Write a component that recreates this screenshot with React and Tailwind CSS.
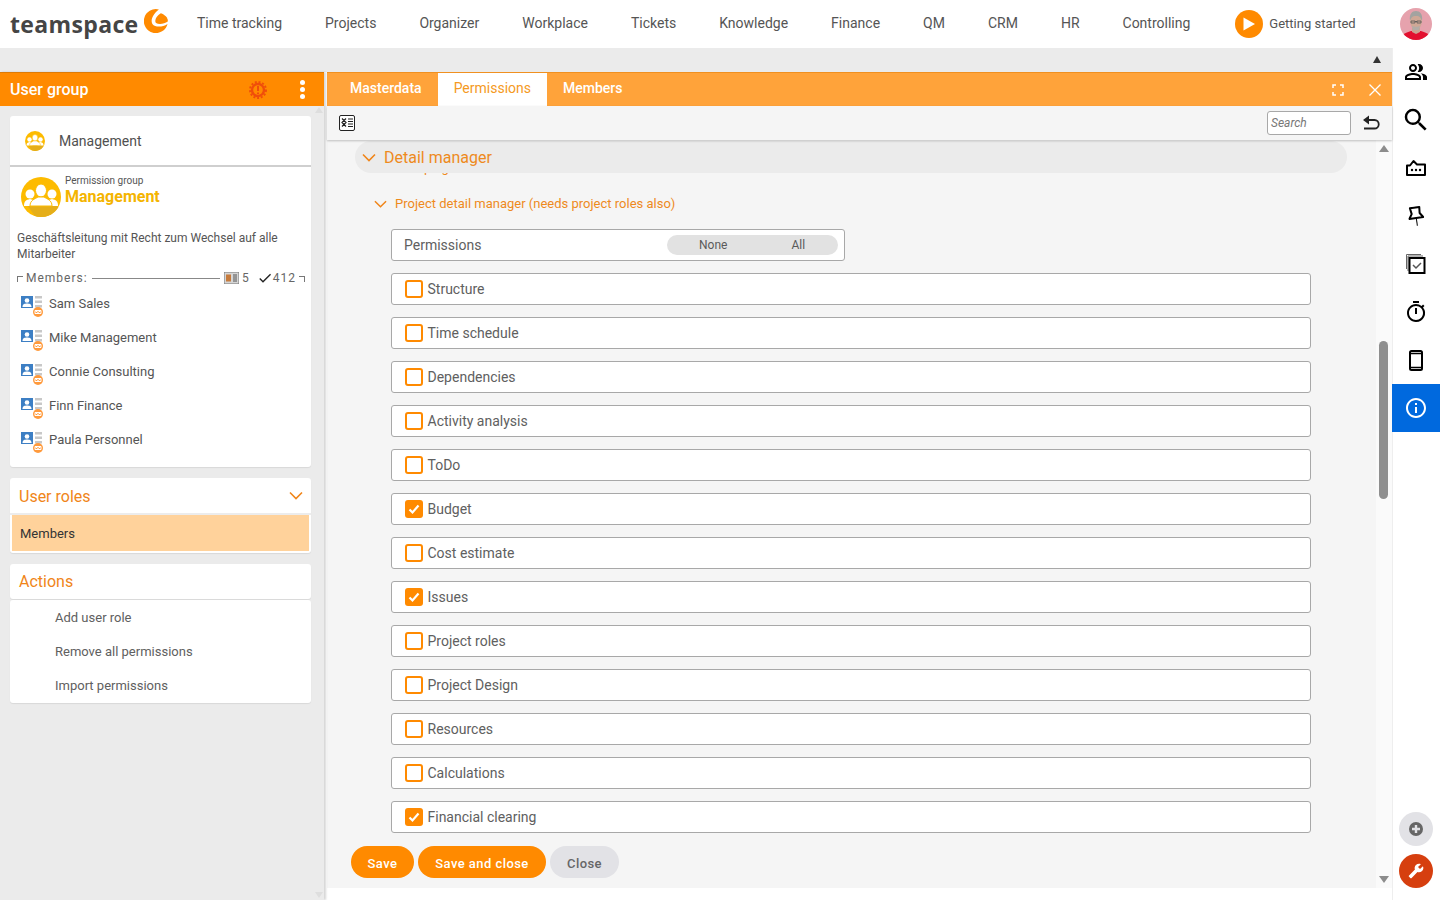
import { MdSearch, MdOutlinePeopleAlt, MdOutlineTimer, MdInfoOutline, MdBuild, MdCheck } from 'react-icons/md';

const navItems = ['Time tracking', 'Projects', 'Organizer', 'Workplace', 'Tickets', 'Knowledge', 'Finance', 'QM', 'CRM', 'HR', 'Controlling'];
const members = ['Sam Sales', 'Mike Management', 'Connie Consulting', 'Finn Finance', 'Paula Personnel'];
const actions = ['Add user role', 'Remove all permissions', 'Import permissions'];
const permissions = [
  { name: 'Structure' },
  { name: 'Time schedule' },
  { name: 'Dependencies' },
  { name: 'Activity analysis' },
  { name: 'ToDo' },
  { name: 'Budget', checked: true },
  { name: 'Cost estimate' },
  { name: 'Issues', checked: true },
  { name: 'Project roles' },
  { name: 'Project Design' },
  { name: 'Resources' },
  { name: 'Calculations' },
  { name: 'Financial clearing', checked: true },
];

function Logo() {
  return (
    <div className="flex items-start w-[157px] ml-[10px]">
      <span className="font-['Open_Sans'] font-bold text-[23px] leading-[50px] tracking-[0.35px] text-[#454545]">teamspace</span>
      <svg width="24" height="24" viewBox="0 0 100 100" className="ml-[5px] mt-[10px] shrink-0">
        <path fill="#ff8a00" d="M62 2A50 50 0 1 0 98 62C75 78 45 76 35 62C25 45 40 18 62 2Z" />
        <path fill="#ff8a00" d="M70 18C50 30 42 50 50 58C62 66 85 62 99 52C101 38 88 24 70 18Z" />
      </svg>
    </div>
  );
}

function Avatar() {
  return (
    <svg width="32" height="32" viewBox="0 0 32 32" className="rounded-full shrink-0">
      <rect width="32" height="32" fill="#e6a2ad" />
      <path fill="#e3102f" d="M1 32c0-6 4-7 10-9h10c6 2 10 3 10 9z" />
      <path fill="#c9a392" d="M12 20h8v4l-4 2-4-2z" />
      <ellipse cx="16" cy="13" rx="6" ry="8.500" fill="#cfa896" />
      <path fill="#a3a3a0" d="M10 13c-1-7 2-10 6-10s7 3 6 10c-1-3-2-5-6-5s-5 2-6 5z" />
      <path fill="#b3aca6" d="M12 18c2 1 6 1 8 0l-1 4h-6z" />
      <path stroke="#555" strokeWidth="0.800" fill="none" d="M11 13h4v2h-4zM17 13h4v2h-4zM15 13.500h2" />
    </svg>
  );
}

function GroupIcon({ size }) {
  return (
    <svg width={size} height={size} viewBox="0 0 40 40" className="shrink-0">
      <circle cx="20" cy="20" r="20" fill="#fdbb00" />
      <path fill="#e5ae19" d="M6 28h28l3.500 2A20 20 0 0 1 14 39z" />
      <g fill="#fff">
        <circle cx="9" cy="17" r="4.500" />
        <path d="M3 29c0-5 2-6 6-7 4 1 6 2 6 7z" />
        <circle cx="31" cy="17" r="4.500" />
        <path d="M25 29c0-5 2-6 6-7 4 1 6 2 6 7z" />
      </g>
      <g fill="#fff" stroke="#fdbb00" strokeWidth="1">
        <ellipse cx="20" cy="13.500" rx="5.500" ry="6.500" />
        <path d="M9 29c0-6 5-7 8-9h6c3 2 8 3 8 9z" />
      </g>
    </svg>
  );
}

function MemberIcon() {
  return (
    <svg width="23" height="22" viewBox="0 0 23 22" className="shrink-0 mt-px">
      <rect x="0" y="0" width="12" height="12" fill="#3d7fc4" />
      <circle cx="6" cy="4.500" r="2.300" fill="#fff" />
      <path fill="#fff" d="M1.500 11c0-3 2-3.500 4.500-3.500s4.500.5 4.500 3.500z" />
      <path fill="#c8c8c8" d="M14 0h7v2.500h-7zM14 4.500h7V7h-7zM14 9h7v2.500h-7z" />
      <circle cx="17" cy="16" r="5" fill="#ff9a3c" />
      <path stroke="#fff" strokeWidth="1" fill="none" d="M14 14.500h6v3h-6zM14 14.500l3 2 3-2" />
    </svg>
  );
}

function Chevron({ size = 14, width = 1.6 }) {
  return (
    <svg width={size} height={size} viewBox="0 0 14 14" className="shrink-0">
      <path d="M1 3.500l6 6 6-6" fill="none" stroke="#f08519" strokeWidth={width} />
    </svg>
  );
}

function Checkbox({ checked }) {
  if (checked) {
    return (
      <span className="w-[18px] h-[18px] rounded-[3px] bg-[#ff8a00] flex items-center justify-center shrink-0">
        <svg width="14" height="14" viewBox="0 0 14 14">
          <path d="M2.500 7.500l3 3 6-7" fill="none" stroke="#fff" strokeWidth="2.200" />
        </svg>
      </span>
    );
  }
  return <span className="w-[18px] h-[18px] rounded-[3px] border-2 border-[#ff8a00] bg-white shrink-0" />;
}

function PermissionRow({ name, checked }) {
  return (
    <div className="h-8 w-[920px] bg-white border border-[#a8a8a8] rounded-[3px] flex items-center pl-[13px] gap-[4.500px] text-[14px] text-[#606060]">
      <Checkbox checked={checked} />
      <span>{name}</span>
    </div>
  );
}

function RailIcon({ children }) {
  return <div className="h-12 flex items-center justify-center text-black">{children}</div>;
}

function Sidebar() {
  return (
    <section className="w-[324px] shrink-0 flex flex-col bg-[#ebebeb] shadow-[2px_0_2px_rgba(0,0,0,0.16)] z-10 relative">
      <span className="absolute left-[315px] top-[35px] w-0 h-0 border-x-[4px] border-x-transparent border-b-[6px] border-b-[#dedede]" />
      <span className="absolute left-[315px] bottom-[2px] w-0 h-0 border-x-[4px] border-x-transparent border-t-[6px] border-t-[#dedede]" />
      <div className="h-[34px] bg-[#ff8a00] border-t border-[#dd7a05] flex items-center pl-[10px] text-white shrink-0">
        <span className="text-[16px] font-medium">User group</span>
        <svg width="18" height="18" viewBox="0 0 18 18" className="ml-auto">
          <circle cx="9" cy="9" r="6" fill="none" stroke="#f04e0a" strokeWidth="2.400" />
          <circle cx="9" cy="9" r="8" fill="none" stroke="#f04e0a" strokeWidth="2" strokeDasharray="2 1.800" />
          <path d="M9 5v5M9 11.500v1.500" stroke="#f04e0a" strokeWidth="2" />
        </svg>
        <div className="flex flex-col gap-[2px] ml-[33px] mr-[19px]">
          <span className="w-[5px] h-[5px] rounded-full bg-white" />
          <span className="w-[5px] h-[5px] rounded-full bg-white" />
          <span className="w-[5px] h-[5px] rounded-full bg-white" />
        </div>
      </div>

      <div className="w-[301px] ml-[10px] mt-[10px] flex flex-col gap-[11px]">
        <div className="bg-white rounded-[3px] shadow-[0_1px_1px_rgba(0,0,0,0.08)] h-[351px]">
          <div className="h-[51px] border-b-2 border-[#cfcfcf] flex items-center pl-[15px] gap-[14px] text-[14px] text-[#505050]">
            <GroupIcon size={20} />
            <span className="pt-[2px]">Management</span>
          </div>
          <div className="px-[7px] relative">
            <div className="flex pl-[4px] pt-[10px]">
              <GroupIcon size={40} />
              <div className="ml-[4px] -mt-[2px]">
                <div className="text-[10px] leading-[12px] text-[#555]">Permission group</div>
                <div className="text-[16px] leading-[18px] font-bold text-[#f4b400] mt-px">Management</div>
              </div>
            </div>
            <p className="text-[12px] leading-4 text-[#555] mt-[13px]">
              Geschäftsleitung mit Recht zum Wechsel auf alle Mitarbeiter
            </p>
            <div className="flex items-center text-[12px] text-[#666] tracking-[1px] mt-[8px] -mr-px h-4">
              <span className="w-[6px] h-[6px] border-t border-l border-[#777] mr-[3px] mt-[2px]" />
              <span>Members:</span>
              <span className="flex-1 border-t border-[#888] ml-[4px] mr-[4px]" />
              <svg width="15" height="12" viewBox="0 0 15 12" className="shrink-0">
                <rect width="15" height="12" fill="#d5d5d5" stroke="#777" />
                <rect x="2" y="2.500" width="5" height="7" fill="#c67b3c" />
                <path d="M9 3h4M9 5h4M9 7h4M9 9h4" stroke="#555" />
              </svg>
              <span className="ml-[3px]">5</span>
              <MdCheck className="ml-[7px] text-[#222] text-[16px]" />
              <span>412</span>
              <span className="w-[6px] h-[6px] border-t border-r border-[#777] ml-[3px] mt-[2px]" />
            </div>
            <ul className="pl-[4px] mt-[3px]">
              {members.map((member) => (
                <li key={member} className="h-[34px] flex items-center gap-[5px] text-[13px] text-[#555]">
                  <MemberIcon />
                  <span className="-mt-[4px]">{member}</span>
                </li>
              ))}
            </ul>
          </div>
        </div>

        <div className="bg-white rounded-[3px] shadow-[0_1px_1px_rgba(0,0,0,0.08)] h-[75px]">
          <div className="h-[35px] flex items-center justify-between pl-[9px] pr-[8px] text-[16px] text-[#f08519]">
            <span className="pt-[2px]">User roles</span>
            <Chevron />
          </div>
          <div className="h-[2px] bg-[#ececec]" />
          <div className="h-9 mx-[2px] bg-[#ffd29b] flex items-center pl-[8px] pt-[2px] text-[13px] text-[#333]">Members</div>
        </div>

        <div className="flex flex-col gap-px">
          <div className="bg-white rounded-[3px] shadow-[0_1px_1px_rgba(0,0,0,0.08)] h-[35px] flex items-center pl-[9px] text-[16px] text-[#f08519]">Actions</div>
          <ul className="bg-white rounded-[3px] shadow-[0_1px_1px_rgba(0,0,0,0.08)] h-[103px] pl-[45px]">
            {actions.map((action) => (
              <li key={action} className="h-[34px] flex items-center pt-[1px] text-[13px] text-[#606060]">{action}</li>
            ))}
          </ul>
        </div>
      </div>
    </section>
  );
}

function Editor() {
  return (
    <section className="flex-1 min-w-0 flex flex-col ml-[3px]">
      <div className="h-[34px] bg-[#ffa33a] border-t border-[#f09020] flex items-stretch pl-[7px] text-[14px] shrink-0">
        <div className="px-4 pb-[2px] flex items-center text-white font-medium">Masterdata</div>
        <div className="px-4 pb-[2px] flex items-center bg-white text-[#f59a23]">Permissions</div>
        <div className="px-4 pb-[2px] flex items-center text-white font-medium">Members</div>
        <div className="ml-auto flex items-center mr-[11px]">
          <svg width="12" height="12" viewBox="0 0 12 12">
            <path d="M1 4V1h3M8 1h3v3M11 8v3H8M4 11H1V8" fill="none" stroke="#fff" strokeWidth="1.500" />
          </svg>
          <svg width="12" height="12" viewBox="0 0 12 12" className="ml-[25px]">
            <path d="M0.500 0.500l11 11M11.500 0.500l-11 11" stroke="#fff" strokeWidth="1.300" />
          </svg>
        </div>
      </div>

      <div className="h-[34px] bg-[#f5f5f5] shadow-[0_1px_2px_rgba(0,0,0,0.22)] flex items-center pl-[12px] pr-[12px] shrink-0 z-20">
        <svg width="17" height="16" viewBox="0 0 17 16">
          <rect x="0.500" y="0.500" width="15" height="15" rx="1.500" fill="#fff" stroke="#222" />
          <path d="M3 3.500l4 4-4 4M7 3.500l-4 4 4 4M9 4h5M9 6.500h5M9 9h5M9 11.500h5" fill="none" stroke="#222" strokeWidth="1.200" />
        </svg>
        <div className="ml-auto w-[84px] h-6 bg-white border border-[#a8a8a8] rounded-[3px] flex items-center pl-[3px] text-[12px] italic text-[#777]">Search</div>
        <svg width="18" height="16" viewBox="0 0 18 16" className="ml-[11px] shrink-0">
          <path d="M7 0.500L1 5l6 4.500z" fill="#222" />
          <path d="M5 5h7.500a3.800 3.800 0 0 1 0 8.500H2" fill="none" stroke="#222" strokeWidth="1.800" />
        </svg>
      </div>

      <div className="h-[748px] flex bg-[#f5f5f5] shrink-0">
        <div className="w-[1049px] pl-[28px] overflow-hidden flex flex-col relative">
          <div className="h-8 mt-px w-[992px] rounded-full bg-[#ebebeb] flex items-center pl-[7px] pt-px gap-[8px] text-[16px] text-[#ee8a1d] shrink-0 relative z-10">
            <Chevron />
            <span>Detail manager</span>
          </div>
          <div className="-mt-[13px] h-[16px] pl-[47px] text-[13px] leading-[16px] text-[#ee8a1d] shrink-0">Scoping</div>
          <div className="mt-[20px] ml-[19px] flex items-center gap-[8px] text-[13px] text-[#ee8a1d] h-[16px] shrink-0">
            <Chevron size={13} />
            <span>Project detail manager (needs project roles also)</span>
          </div>
          <div className="ml-[36px] mt-[17px] flex flex-col gap-3">
            <div className="h-8 w-[454px] bg-white border border-[#a8a8a8] rounded-[3px] flex items-center justify-between pl-[12px] pr-[6px] text-[14px] text-[#606060]">
              <span>Permissions</span>
              <div className="w-[171px] h-5 rounded-full bg-[#e2e2e2] flex items-center text-[12px] text-[#5a5a5a] pl-[32px]">
                <span>None</span>
                <span className="ml-[64px]">All</span>
              </div>
            </div>
            {permissions.map((item) => (
              <PermissionRow key={item.name} name={item.name} checked={item.checked} />
            ))}
          </div>
          <div className="absolute left-[24px] top-[706px] h-8 flex gap-[4px] text-[13px] font-medium tracking-[0.45px]">
            <button className="w-[63px] pt-[3px] rounded-full bg-[#ff8a00] text-white">Save</button>
            <button className="w-[128px] pt-[3px] rounded-full bg-[#ff8a00] text-white">Save and close</button>
            <button className="w-[69px] pt-[3px] rounded-full bg-[#e2e2e6] text-[#666]">Close</button>
          </div>
        </div>
        <div className="w-[16px] pr-px bg-[#fafafa] flex flex-col items-center">
          <span className="mt-[5px] w-0 h-0 border-x-[5px] border-x-transparent border-b-[7px] border-b-[#8c8c8c]" />
          <span className="mt-[189px] w-[9px] h-[158px] rounded-full bg-[#8f8f8f]" />
          <span className="mt-auto mb-[5px] w-0 h-0 border-x-[5px] border-x-transparent border-t-[7px] border-t-[#8c8c8c]" />
        </div>
      </div>
      <div className="flex-1 bg-white" />
    </section>
  );
}

export default function App() {
  return (
    <div className="w-[1440px] h-[900px] overflow-hidden flex flex-col bg-white font-['Roboto',sans-serif]">
      <header className="h-12 flex items-center shrink-0">
        <Logo />
        <nav className="flex gap-[43px] ml-[30px] -mt-[2px] text-[14px] text-[#555]">
          {navItems.map((item) => (
            <span key={item}>{item}</span>
          ))}
        </nav>
        <div className="flex items-center gap-[6px] ml-[45px] text-[13px] text-[#555]">
          <span className="w-7 h-7 rounded-full bg-[#ff8a00] flex items-center justify-center">
            <svg width="12" height="14" viewBox="0 0 12 14"><path d="M0.500 0.500L12 7 0.500 13.500z" fill="#fff" /></svg>
          </span>
          <span className="-mt-[1px]">Getting started</span>
        </div>
        <div className="ml-auto mr-2">
          <Avatar />
        </div>
      </header>

      <div className="flex flex-1 min-h-0">
        <main className="w-[1392px] flex flex-col shrink-0">
          <div className="h-6 bg-[#ebebeb] flex justify-end items-center pr-[11px] pb-[2px] shrink-0">
            <span className="w-0 h-0 border-x-[4px] border-x-transparent border-b-[7px] border-b-[#333]" />
          </div>
          <div className="flex flex-1 min-h-0 bg-white">
            <Sidebar />
            <Editor />
          </div>
        </main>

        <aside className="w-12 flex flex-col bg-white shadow-[inset_1px_0_0_#eeeeee]">
          <RailIcon><MdOutlinePeopleAlt className="text-[24px]" /></RailIcon>
          <RailIcon><MdSearch className="text-[30px]" /></RailIcon>
          <RailIcon>
            <svg width="20" height="18" viewBox="0 0 20 18">
              <path d="M1 6.500h3L7.500 2 11 5.500h8V16H1z" fill="none" stroke="#000" strokeWidth="2" strokeLinejoin="round" />
              <circle cx="6" cy="11" r="1.200" />
              <circle cx="10" cy="11" r="1.200" />
              <circle cx="14" cy="11" r="1.200" />
            </svg>
          </RailIcon>
          <RailIcon>
            <svg width="16" height="20" viewBox="0 0 16 20" className="rotate-[-8deg]">
              <path d="M3 1.500h9.500l-.5 6 3 4.500H1l3-4.500z" fill="none" stroke="#000" strokeWidth="2" strokeLinejoin="round" />
              <path d="M8 12v8" stroke="#000" strokeWidth="1" />
            </svg>
          </RailIcon>
          <RailIcon>
            <svg width="20" height="20" viewBox="0 0 20 20">
              <path d="M0.500 15V0.500H15M2 17V2h15" fill="none" stroke="#666" />
              <rect x="3.500" y="4" width="15" height="15" fill="#fff" stroke="#000" strokeWidth="2" />
              <path d="M7 11l3 3 5-5" fill="none" stroke="#555" strokeWidth="1.500" />
            </svg>
          </RailIcon>
          <RailIcon><MdOutlineTimer className="text-[24px]" /></RailIcon>
          <RailIcon>
            <svg width="14" height="21" viewBox="0 0 14 21">
              <rect x="1" y="1" width="12" height="19" rx="1.500" fill="none" stroke="#000" strokeWidth="2" />
              <path d="M1 3.500h12M1 17.500h12" stroke="#000" strokeWidth="1.500" />
            </svg>
          </RailIcon>
          <div className="h-12 bg-[#0069de] flex items-center justify-center">
            <MdInfoOutline className="text-white text-[24px]" />
          </div>
          <div className="mt-auto flex flex-col items-center gap-2 mb-3">
            <span className="w-[34px] h-[34px] rounded-full bg-[#e2e2e6] flex items-center justify-center">
              <svg width="14" height="14" viewBox="0 0 14 14">
                <circle cx="7" cy="7" r="7" fill="#666" />
                <path d="M7 3v8M3 7h8" stroke="#e2e2e6" strokeWidth="2.400" />
              </svg>
            </span>
            <span className="w-[34px] h-[34px] rounded-full bg-[#d63f0f] flex items-center justify-center">
              <MdBuild className="text-white text-[16px] -scale-x-100" />
            </span>
          </div>
        </aside>
      </div>
    </div>
  );
}
